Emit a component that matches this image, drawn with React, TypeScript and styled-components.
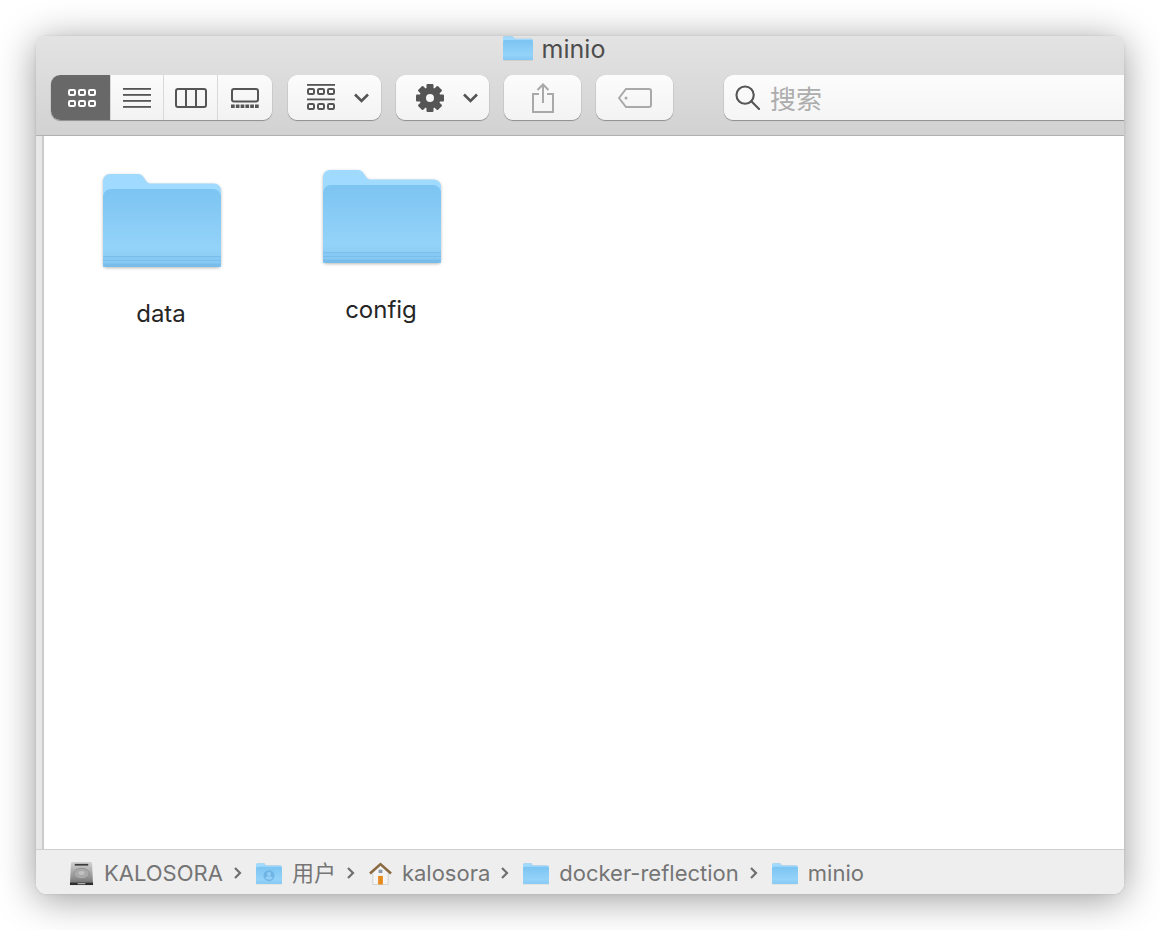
import React from 'react';
import styled, { createGlobalStyle } from 'styled-components';

const GlobalStyle = createGlobalStyle`
  html, body {
    margin: 0;
    padding: 0;
    background: #fff;
    font-family: 'Inter', 'Liberation Sans', 'Noto Sans CJK SC', sans-serif;
  }
`;

const Page = styled.div`
  width: 1160px;
  height: 930px;
  box-sizing: border-box;
  padding: 36px;
  overflow: hidden;
`;

const Window = styled.div`
  width: 1088px;
  height: 858px;
  display: flex;
  flex-direction: column;
  border-radius: 11px;
  background: #fff;
  box-shadow: 0 0 3px rgba(0, 0, 0, 0.1), 0 5px 38px rgba(0, 0, 0, 0.4);
`;

const TitleBar = styled.div`
  height: 100px;
  box-sizing: border-box;
  flex: none;
  border-radius: 11px 11px 0 0;
  background: linear-gradient(#e3e3e3, #d2d2d2);
  border-bottom: 1px solid #b1b1b1;
  display: flex;
  flex-direction: column;
`;

const TitleRow = styled.div`
  height: 39px;
  flex: none;
  display: flex;
  justify-content: center;
  align-items: flex-start;
  gap: 9px;
  padding-right: 52px;
`;

const TitleText = styled.span`
  font-size: 25px;
  line-height: 27px;
  color: #4d4d4d;
`;

const Toolbar = styled.div`
  display: flex;
  align-items: flex-start;
  padding-left: 15px;
  overflow: hidden;
  padding-bottom: 3px;
`;

const Group = styled.div`
  display: flex;
  height: 45px;
  width: 221px;
  flex: none;
  border-radius: 9px;
  overflow: hidden;
  box-shadow: 0 1px 1px rgba(0, 0, 0, 0.3), 0 0 0 0.5px rgba(0, 0, 0, 0.08);
  background: linear-gradient(#fbfbfb, #f2f2f2);
`;

const Segment = styled.div<{ $active?: boolean; $w: number }>`
  width: ${(p) => p.$w}px;
  flex: none;
  display: flex;
  align-items: center;
  justify-content: center;
  box-sizing: border-box;
  padding-left: ${(p) => (p.$active ? 2 : 0)}px;
  background: ${(p) => (p.$active ? '#686868' : 'transparent')};
  color: ${(p) => (p.$active ? '#fff' : '#555')};
  & + & {
    border-left: 1px solid #d9d9d9;
  }
`;

const ToolButton = styled.div<{ $w: number; $left: number; $pad?: number }>`
  width: ${(p) => p.$w}px;
  height: 45px;
  flex: none;
  margin-left: ${(p) => p.$left}px;
  display: flex;
  align-items: center;
  justify-content: center;
  gap: 19px;
  padding-left: ${(p) => p.$pad ?? 0}px;
  box-sizing: border-box;
  border-radius: 9px;
  color: #555;
  background: linear-gradient(#fcfcfc, #f3f3f3);
  box-shadow: 0 1px 1px rgba(0, 0, 0, 0.3), 0 0 0 0.5px rgba(0, 0, 0, 0.08);
`;

const SearchField = styled.div`
  width: 500px;
  height: 45px;
  flex: none;
  margin-left: 51px;
  display: flex;
  align-items: center;
  gap: 10px;
  padding-left: 11px;
  box-sizing: border-box;
  border-radius: 9px;
  background: linear-gradient(#fcfcfc, #f5f5f5);
  box-shadow: 0 1px 1px rgba(0, 0, 0, 0.3), 0 0 0 0.5px rgba(0, 0, 0, 0.08);
`;

const SearchHint = styled.span`
  font-size: 26px;
  color: #adadad;
  font-family: 'Noto Sans CJK SC', sans-serif;
`;

const Body = styled.div`
  flex: 1;
  display: flex;
  min-height: 0;
`;

const SideStrip = styled.div`
  width: 8px;
  flex: none;
  box-sizing: border-box;
  background: #e8e8e8;
  border-right: 2px solid #cbcbcb;
`;

const Content = styled.div`
  flex: 1;
  background: #fff;
  display: flex;
  align-items: flex-start;
  padding-left: 51px;
  gap: 86px;
`;

const FileItem = styled.div<{ $top: number }>`
  width: 134px;
  margin-top: ${(p) => p.$top}px;
  display: flex;
  flex-direction: column;
  align-items: center;
`;

const FileName = styled.span`
  margin-top: 33px;
  margin-right: 2px;
  font-size: 24px;
  line-height: 28px;
  color: #262626;
`;

const StatusBar = styled.div`
  height: 45px;
  flex: none;
  box-sizing: border-box;
  border-radius: 0 0 11px 11px;
  background: #eeeeee;
  border-top: 1px solid #cfcfcf;
  display: flex;
  align-items: center;
  padding: 2px 0 0 33px;
`;

const Crumb = styled.div`
  display: flex;
  align-items: center;
  gap: 10px;
`;

const CrumbText = styled.span<{ $cjk?: boolean }>`
  font-size: 22px;
  color: #757575;
  margin-bottom: ${(p) => (p.$cjk ? 4 : 0)}px;
  font-family: 'Inter', 'Noto Sans CJK SC', sans-serif;
`;

const CrumbSep = styled.svg`
  margin: 0 14px 0 11px;
  flex: none;
`;

const Folder: React.FC<{ id: string; w: number; h: number; lines?: boolean; person?: boolean }> = ({
  id,
  w,
  h,
  lines,
  person,
}) => (
  <svg width={w} height={h} viewBox="0 0 118 94" style={{ flex: 'none', display: 'block', overflow: 'visible' }}>
    <defs>
      <linearGradient id={`${id}-body`} x1="0" y1="0" x2="0" y2="1">
        <stop offset="0" stopColor="#7cc4f2" />
        <stop offset="0.75" stopColor="#94d3f9" />
        <stop offset="1" stopColor="#84c8f3" />
      </linearGradient>
    </defs>
    <path
      d="M0 8a7 7 0 0 1 7-7h27c4 0 5 1 7 4l2 3c1.500 2 3 2.500 5 2.500h63a7 7 0 0 1 7 7V90a4 4 0 0 1-4 4H4a4 4 0 0 1-4-4z"
      fill="#a0daff"
      style={{ filter: 'drop-shadow(0 1px 1.500px rgba(0,0,0,.28))' }}
    />
    <path d="M0 23a8 8 0 0 1 8-7h102a8 8 0 0 1 8 7v67a4 4 0 0 1-4 4H4a4 4 0 0 1-4-4z" fill={`url(#${id}-body)`} />
    {lines && (
      <g>
        <rect x="0" y="83" width="118" height="11" fill="#86c9f4" />
        <rect x="0" y="83" width="118" height="1" fill="#7cbeea" />
        <rect x="0" y="87" width="118" height="1" fill="#7cbeea" />
        <path d="M0 90.500h118V90a4 4 0 0 1-4 4H4a4 4 0 0 1-4-4z" fill="#78bce9" />
      </g>
    )}
    {person && (
      <g fill="#4f96cf">
        <circle cx="59" cy="57" r="25" fill="#62a9dd" opacity="0.7" />
        <circle cx="59" cy="49" r="9" fill="#93d0f7" />
        <path d="M42 70c3-8 9-10 17-10s14 2 17 10c-9 7-25 7-34 0z" fill="#93d0f7" />
      </g>
    )}
  </svg>
);

const Chevron = () => (
  <svg width="15" height="10" viewBox="0 0 15 10" fill="none" stroke="#555" strokeWidth="2.600" style={{ flex: 'none' }}>
    <path d="M1 1.500 7.500 8 14 1.500" />
  </svg>
);

const Sep = () => (
  <CrumbSep width="8" height="12" viewBox="0 0 8 12" fill="none" stroke="#6f6f6f" strokeWidth="2.200">
    <path d="M1 1 6 6l-5 5" />
  </CrumbSep>
);

const CellRow: React.FC<{ y: number }> = ({ y }) => (
  <g fill="none" stroke="currentColor" strokeWidth="2">
    {[0, 1, 2].map((c) => (
      <rect key={c} x={1 + c * 10} y={y + 1} width="6" height="5" rx="1.200" />
    ))}
  </g>
);

const IconsView = () => (
  <svg width="28" height="18" viewBox="0 0 28 18">
    <CellRow y={0} />
    <CellRow y={11} />
  </svg>
);

const ListView = () => (
  <svg width="28" height="20" viewBox="0 0 28 20" fill="currentColor">
    <rect x="0" y="0" width="28" height="1.800" />
    <rect x="0" y="6" width="28" height="1.800" />
    <rect x="0" y="12" width="28" height="1.800" />
    <rect x="0" y="18" width="28" height="1.800" />
  </svg>
);

const ColumnView = () => (
  <svg width="32" height="20" viewBox="0 0 32 20" fill="none" stroke="currentColor" strokeWidth="2">
    <rect x="1" y="1" width="30" height="18" rx="2" />
    <path d="M11 1v18M21 1v18" />
  </svg>
);

const GalleryView = () => (
  <svg width="28" height="20" viewBox="0 0 28 20">
    <rect x="1" y="1" width="26" height="12.500" rx="2" fill="none" stroke="currentColor" strokeWidth="2" />
    {[0, 1, 2, 3, 4, 5].map((i) => (
      <rect key={i} x={i * 4.800} y="16.500" width="3.700" height="3.500" fill="currentColor" />
    ))}
  </svg>
);

const ArrangeIcon = () => (
  <svg width="28" height="27" viewBox="0 0 28 27" style={{ flex: 'none' }}>
    <rect x="0" y="0" width="28" height="1.800" fill="currentColor" />
    <rect x="0" y="14.500" width="28" height="1.800" fill="currentColor" />
    <CellRow y={4} />
    <CellRow y={19} />
  </svg>
);

const Gear = () => {
  const teeth = [0, 45, 90, 135, 180, 225, 270, 315];
  return (
    <svg width="28" height="28" viewBox="0 0 28 28" fill="#555" style={{ flex: 'none' }}>
      {teeth.map((a) => (
        <rect key={a} x="10.500" y="0" width="7" height="8" rx="1" transform={`rotate(${a} 14 14)`} />
      ))}
      <path
        fillRule="evenodd"
        d="M14 3.500a10.500 10.500 0 1 0 0 21a10.500 10.500 0 1 0 0-21zM14 10a4 4 0 1 1 0 8a4 4 0 1 1 0-8z"
      />
    </svg>
  );
};

const ShareIcon = () => (
  <svg width="22" height="30" viewBox="0 0 22 30" fill="none" stroke="#a9a9a9" strokeWidth="2">
    <path d="M7 11H1v18h20V11h-6" />
    <path d="M11 20V1.500M5.500 7 11 1.500 16.500 7" />
  </svg>
);

const TagIcon = () => (
  <svg width="34" height="20" viewBox="0 0 34 20" fill="none" stroke="#a9a9a9" strokeWidth="2">
    <path d="M8 1h23a2 2 0 0 1 2 2v14a2 2 0 0 1-2 2H8L1 10z" />
    <circle cx="8" cy="10" r="1.500" fill="#a9a9a9" stroke="none" />
  </svg>
);

const SearchIcon = () => (
  <svg width="25" height="25" viewBox="0 0 26 26" fill="none" stroke="#555" strokeWidth="2.200">
    <circle cx="10.500" cy="10.500" r="9" />
    <path d="M17 17 25 25" strokeLinecap="round" />
  </svg>
);

const DriveIcon = () => (
  <svg width="25" height="25" viewBox="0 0 26 26" style={{ flex: 'none' }}>
    <defs>
      <linearGradient id="drive" x1="0" y1="0" x2="0" y2="1">
        <stop offset="0" stopColor="#d2d2d2" />
        <stop offset="0.55" stopColor="#9e9e9e" />
        <stop offset="1" stopColor="#6b6b6b" />
      </linearGradient>
    </defs>
    <path d="M2 2.500a1.500 1.500 0 0 1 1.500-1.500h19a1.500 1.500 0 0 1 1.500 1.500L25 25H1z" fill="url(#drive)" />
    <rect x="6" y="3" width="14" height="1.800" fill="#3b3b3b" />
    <ellipse cx="13" cy="13" rx="8" ry="5.500" fill="#a9a9a9" stroke="#7e7e7e" strokeWidth="0.600" />
    <ellipse cx="13" cy="12.500" rx="3" ry="2" fill="#c2c2c2" />
    <rect x="1" y="22.500" width="24" height="2.500" fill="#2e2e2e" />
    <rect x="9" y="23" width="8" height="1.200" fill="#bdbdbd" />
  </svg>
);

const HomeIcon = () => (
  <svg width="23" height="23" viewBox="0 0 24 24" style={{ flex: 'none' }}>
    <path d="M4 11 12 4l8 7v12.500H4z" fill="#f4f4f4" stroke="#c9c9c9" strokeWidth="0.800" />
    <path d="M1 12 12 2.200 23 12" fill="none" stroke="#8b6a42" strokeWidth="2.600" />
    <rect x="9.500" y="14.500" width="5" height="9" fill="#e58a1f" />
    <rect x="10" y="8" width="4" height="3.500" fill="#8b9aa8" />
  </svg>
);

export default function App() {
  return (
    <Page>
      <GlobalStyle />
      <Window>
        <TitleBar>
          <TitleRow>
            <Folder id="title" w={30} h={24} lines={false} />
            <TitleText>minio</TitleText>
          </TitleRow>
          <Toolbar>
            <Group>
              <Segment $active $w={59}>
                <IconsView />
              </Segment>
              <Segment $w={53}>
                <ListView />
              </Segment>
              <Segment $w={54}>
                <ColumnView />
              </Segment>
              <Segment $w={55}>
                <GalleryView />
              </Segment>
            </Group>
            <ToolButton $w={93} $left={16} $pad={7}>
              <ArrangeIcon />
              <Chevron />
            </ToolButton>
            <ToolButton $w={93} $left={15} $pad={8}>
              <Gear />
              <Chevron />
            </ToolButton>
            <ToolButton $w={77} $left={15}>
              <ShareIcon />
            </ToolButton>
            <ToolButton $w={77} $left={15}>
              <TagIcon />
            </ToolButton>
            <SearchField>
              <SearchIcon />
              <SearchHint>搜索</SearchHint>
            </SearchField>
          </Toolbar>
        </TitleBar>
        <Body>
          <SideStrip />
          <Content>
            <FileItem $top={37}>
              <Folder id="data" w={118} h={94} lines />
              <FileName>data</FileName>
            </FileItem>
            <FileItem $top={33}>
              <Folder id="config" w={118} h={94} lines />
              <FileName>config</FileName>
            </FileItem>
          </Content>
        </Body>
        <StatusBar>
          <Crumb>
            <DriveIcon />
            <CrumbText>KALOSORA</CrumbText>
          </Crumb>
          <Sep />
          <Crumb>
            <Folder id="users" w={26} h={21} person />
            <CrumbText $cjk>用户</CrumbText>
          </Crumb>
          <Sep />
          <Crumb>
            <HomeIcon />
            <CrumbText>kalosora</CrumbText>
          </Crumb>
          <Sep />
          <Crumb>
            <Folder id="docker" w={26} h={21} />
            <CrumbText>docker-reflection</CrumbText>
          </Crumb>
          <Sep />
          <Crumb>
            <Folder id="minio" w={26} h={21} />
            <CrumbText>minio</CrumbText>
          </Crumb>
        </StatusBar>
      </Window>
    </Page>
  );
}
